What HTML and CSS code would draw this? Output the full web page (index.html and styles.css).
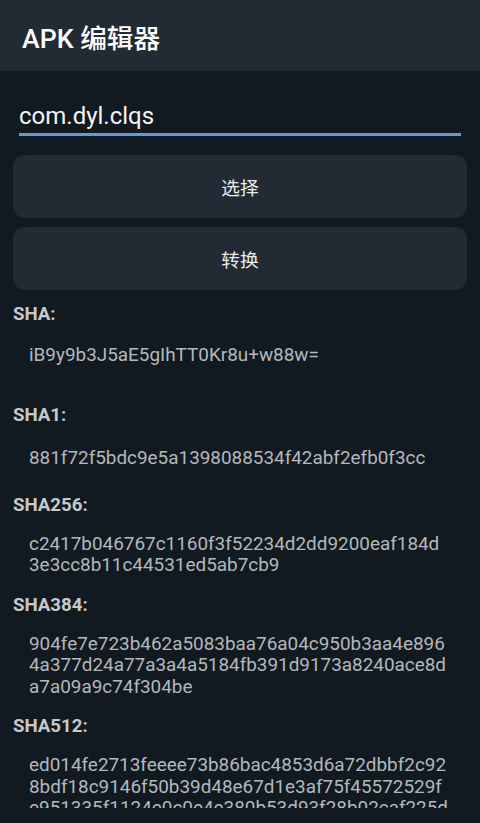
FILE: index.html
```html
<!DOCTYPE html>
<html lang="zh">
<head>
<meta charset="utf-8">
<title>APK 编辑器</title>
<link rel="stylesheet" href="styles.css">
</head>
<body>
<div class="app">
  <header class="toolbar">
    <h1 class="title">APK 编辑器</h1>
  </header>
  <main class="content">
    <div class="field"><span class="field-text">com.dyl.clqs</span></div>
    <button class="btn btn-first" type="button">选择</button>
    <button class="btn btn-second" type="button">转换</button>

    <section class="hash hash-first">
      <div class="hash-label">SHA:</div>
      <div class="hash-value hash-value-trail">iB9y9b3J5aE5gIhTT0Kr8u+w88w=</div>
    </section>

    <section class="hash hash-second">
      <div class="hash-label">SHA1:</div>
      <div class="hash-value hash-value-wide">881f72f5bdc9e5a1398088534f42abf2efb0f3cc</div>
    </section>

    <section class="hash hash-third">
      <div class="hash-label">SHA256:</div>
      <div class="hash-value">c2417b046767c1160f3f52234d2dd9200eaf184d<br>3e3cc8b11c44531ed5ab7cb9</div>
    </section>

    <section class="hash">
      <div class="hash-label">SHA384:</div>
      <div class="hash-value">904fe7e723b462a5083baa76a04c950b3aa4e896<br>4a377d24a77a3a4a5184fb391d9173a8240ace8d<br>a7a09a9c74f304be</div>
    </section>

    <section class="hash">
      <div class="hash-label">SHA512:</div>
      <div class="hash-value">ed014fe2713feeee73b86bac4853d6a72dbbf2c92<br>8bdf18c9146f50b39d48e67d1e3af75f45572529f<br>e951335f1124e0c0e4e380b53d93f28b02caf225d</div>
    </section>
  </main>
</div>
</body>
</html>
```

FILE: styles.css
```css
* {
  box-sizing: border-box;
}

html, body {
  margin: 0;
  padding: 0;
  background: #121a21;
}

body {
  font-family: Roboto, "Noto Sans CJK SC", sans-serif;
  color: #e8e8e8;
}

.app {
  width: 480px;
  height: 823px;
  overflow: hidden;
  background: #121a21;
}

.toolbar {
  height: 71px;
  background: #222a33;
  padding: 7px 0 0 22px;
}

.title {
  margin: 0;
  font-size: 26.67px;
  font-weight: 500;
  line-height: 64px;
  color: #ffffff;
  font-family: Roboto, "Noto Sans CJK SC", sans-serif;
}

.content {
  height: 737px;
  overflow: hidden;
  padding: 0 13px;
}

.field {
  margin: 31px 6px 0;
  padding-bottom: 3px;
  border-bottom: 3px solid #5c9fd6;
}

.field-text {
  display: block;
  font-size: 24px;
  line-height: 28px;
  color: #f4f4f4;
}

.btn {
  display: block;
  width: 100%;
  height: 63px;
  border: none;
  border-radius: 12px;
  background: #222a33;
  color: #ececec;
  font-family: Roboto, "Noto Sans CJK SC", sans-serif;
  font-size: 18.67px;
  padding: 0;
  margin: 0;
}

.btn-first {
  margin-top: 19px;
}

.btn-second {
  margin-top: 9px;
}

.hash {
  margin-top: 18px;
}

.hash-first {
  margin-top: 13px;
}

.hash-second {
  margin-top: 17px;
}

.hash-third {
  margin-top: 25px;
}

.hash-label {
  font-size: 18.67px;
  font-weight: 700;
  line-height: 22px;
  color: #c6c9cc;
}

.hash-value {
  margin-top: 17px;
  padding-left: 16px;
  font-size: 18.9px;
  line-height: 21.5px;
  color: #b4b8bc;
  white-space: nowrap;
}

.hash-value-trail {
  margin-top: 18.5px;
  padding-bottom: 21.5px;
}

.hash-value-wide {
  margin-top: 21.5px;
}
```
